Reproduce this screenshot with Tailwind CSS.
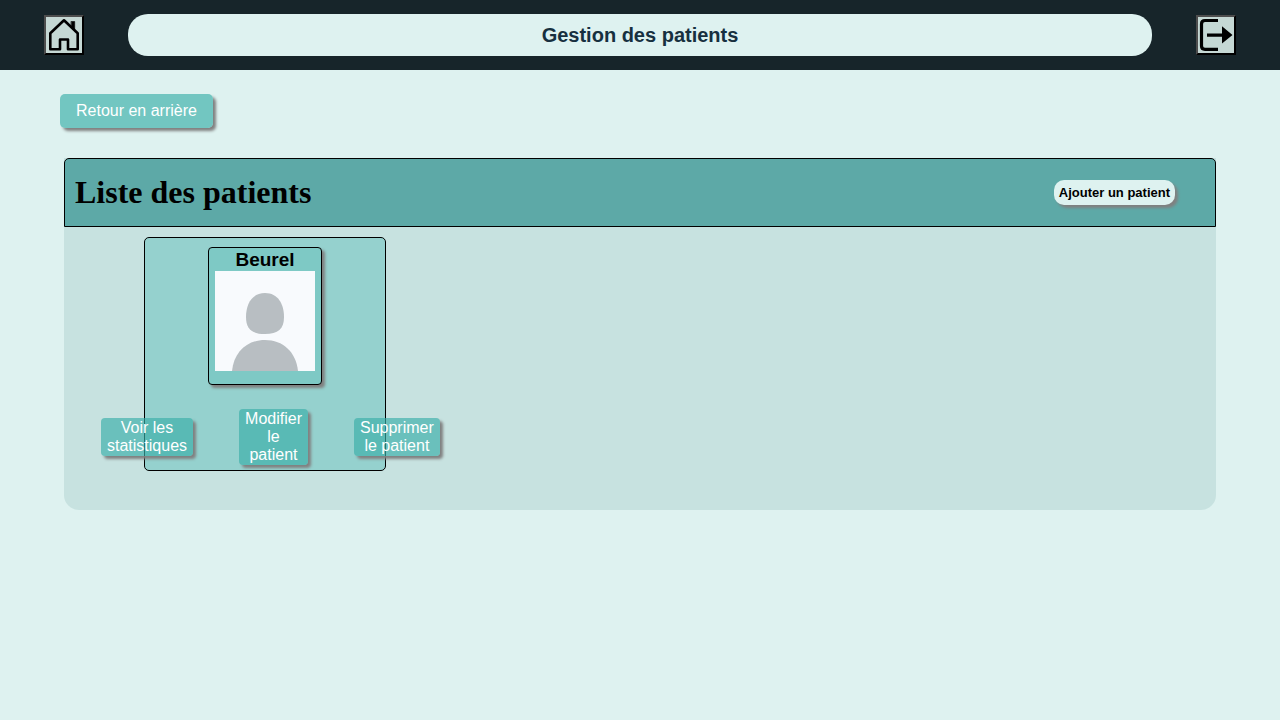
<!DOCTYPE html>
<html lang="fr">
<head>
<meta charset="utf-8">
<meta name="viewport" content="width=device-width, initial-scale=1">
<title>Gestion des patients</title>
<script src="https://cdn.jsdelivr.net/npm/@tailwindcss/browser@4"></script>
</head>
<body class="min-h-screen bg-[#def2f0] font-['Liberation_Sans',Arial,sans-serif] text-black">
<header class="flex h-[70px] items-center bg-[#17252a]">
  <div class="flex w-1/10 justify-center">
    <button type="button" aria-label="Accueil" class="size-10 border-2 border-t-[#4d4d4d] border-l-[#4d4d4d] border-r-black border-b-black bg-[#c5d8d4]">
      <svg viewBox="0 0 36 36" class="size-9" fill="none" stroke="#000" stroke-width="2.6" stroke-linejoin="round" stroke-linecap="round">
        <path d="M4.300 16.300V32.300H14V22.500H22V32.300H31.700V16.300L18 3.300Z"/>
        <path d="M25.300 4.500H28.700V13.500L25.300 10.300Z" fill="#000" stroke-width="0.6"/>
      </svg>
    </button>
  </div>
  <h1 class="flex-1 rounded-[20px] bg-[#def2f0] py-2 text-center text-[20px] leading-[26px] font-bold text-[#17303f]">Gestion des patients</h1>
  <div class="flex w-1/10 justify-center">
    <button type="button" aria-label="Se déconnecter" class="size-10 border-2 border-t-[#4d4d4d] border-l-[#4d4d4d] border-r-black border-b-black bg-[#c5d8d4]">
      <svg viewBox="0 0 36 36" class="size-9">
        <path d="M20 3.500H7Q3.500 3.500 3.500 7V29Q3.500 32.300 7 32.300H20" fill="none" stroke="#000" stroke-width="3.200"/>
        <path d="M9 16.400H24V9.300L34.500 18L24 26.500V19.800H9Z"/>
      </svg>
    </button>
  </div>
</header>
<main>
  <div class="px-15 pt-6">
    <button type="button" class="rounded-[5px] bg-[#3aafa9]/66 px-4 pt-2 pb-2 text-[16px] leading-[18px] text-white shadow-[3px_3px_3px_#808080]">Retour en arrière</button>
  </div>
  <section class="mx-[5%] mt-[30px] rounded-b-[15px] bg-[#c7e2e0] pb-[39px]">
    <div class="flex items-center justify-between rounded-t-[5px] border border-black bg-[#5da9a7] py-4 pr-10 pl-[10px]">
      <h2 class="font-['Liberation_Serif','Times_New_Roman',serif] text-[32px] leading-[35px] font-bold">Liste des patients</h2>
      <button type="button" class="rounded-[10px] bg-[#def2f0] px-[5px] py-[5px] text-[13px] leading-[15px] font-bold shadow-[3px_3px_3px_#808080]">Ajouter un patient</button>
    </div>
    <article class="mt-[10px] ml-20 w-[242px] rounded-[5px] border border-black bg-[#95d1ce] pt-[9px] pb-[5px]">
      <div class="mx-auto flex w-[114px] flex-col items-center rounded-[4px] border border-black bg-[#7ec9c5] pb-[13px] shadow-[3px_3px_3px_#808080]">
        <h3 class="text-[19px] leading-[23px] font-bold">Beurel</h3>
        <svg viewBox="0 0 100 100" class="size-25 bg-[#f8fafd]" role="img" aria-label="Photo du patient" fill="#b8bec2">
          <path d="M50 22C63 22 69 33 69 46C69 58 63 63 50 63S31 58 31 46C31 33 37 22 50 22Z"/>
          <path d="M17 100C19 81 32 69 50 69S81 81 83 100Z"/>
        </svg>
      </div>
      <div class="mt-6 -ml-11 flex w-max items-center gap-[46px] text-[16px] leading-[18px] text-white">
        <button type="button" class="rounded-[4px] bg-[#3aafa9]/66 px-[6px] py-px shadow-[3px_3px_3px_#808080]">Voir les<br>statistiques</button>
        <button type="button" class="rounded-[4px] bg-[#3aafa9]/66 px-[6px] py-px shadow-[3px_3px_3px_#808080]">Modifier<br>le<br>patient</button>
        <button type="button" class="rounded-[4px] bg-[#3aafa9]/66 px-[6px] py-px shadow-[3px_3px_3px_#808080]">Supprimer<br>le patient</button>
      </div>
    </article>
  </section>
</main>
</body>
</html>
